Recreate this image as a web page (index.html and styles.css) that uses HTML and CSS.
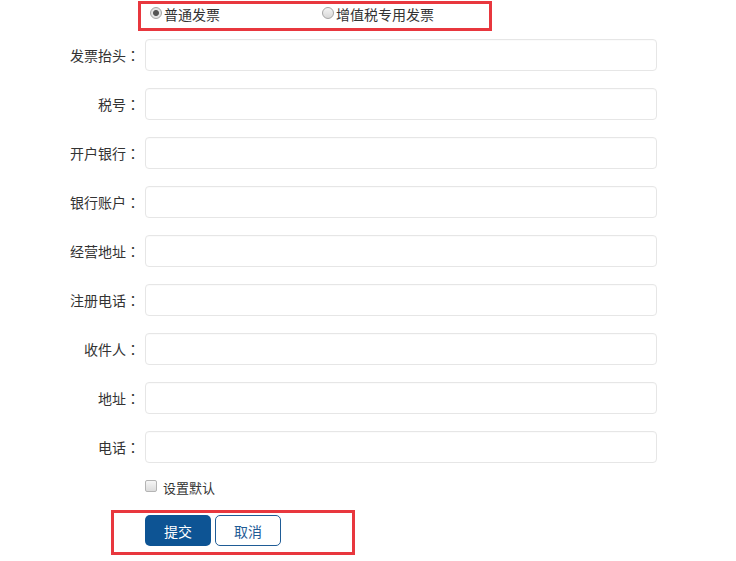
FILE: index.html
```html
<!DOCTYPE html>
<html lang="zh-CN">
<head>
  <meta charset="UTF-8" />
  <meta name="viewport" content="width=device-width, initial-scale=1.0" />
  <title>发票信息</title>
  <link rel="stylesheet" href="styles.css">
</head>
<body>
  <form class="invoice-form">
    <div class="invoice-type">
      <label class="type-option"><input type="radio" name="type" checked>普通发票</label>
      <label class="type-option second"><input type="radio" name="type">增值税专用发票</label>
    </div>

    <div class="row"><label class="row-label">发票抬头<span class="colon">：</span></label><input class="field" type="text"></div>
    <div class="row"><label class="row-label">税号<span class="colon">：</span></label><input class="field" type="text"></div>
    <div class="row"><label class="row-label">开户银行<span class="colon">：</span></label><input class="field" type="text"></div>
    <div class="row"><label class="row-label">银行账户<span class="colon">：</span></label><input class="field" type="text"></div>
    <div class="row"><label class="row-label">经营地址<span class="colon">：</span></label><input class="field" type="text"></div>
    <div class="row"><label class="row-label">注册电话<span class="colon">：</span></label><input class="field" type="text"></div>
    <div class="row"><label class="row-label">收件人<span class="colon">：</span></label><input class="field" type="text"></div>
    <div class="row"><label class="row-label">地址<span class="colon">：</span></label><input class="field" type="text"></div>
    <div class="row"><label class="row-label">电话<span class="colon">：</span></label><input class="field" type="text"></div>

    <label class="default-check"><input type="checkbox">设置默认</label>

    <div class="actions">
      <button type="button" class="btn btn-submit">提交</button>
      <button type="button" class="btn btn-cancel">取消</button>
    </div>
  </form>
</body>
</html>
```

FILE: styles.css
```css
body {
  margin: 0;
  font-family: "Noto Sans CJK SC", "Liberation Sans", sans-serif;
  font-size: 14px;
  color: #333;
  background-color: #fff;
}

.invoice-form {
  padding-top: 1px;
}

.invoice-type {
  display: flex;
  align-items: center;
  margin-left: 138px;
  width: 348px;
  height: 20px;
  padding-bottom: 4px;
  border: 3px solid #e8373e;
}

.type-option {
  display: flex;
  align-items: center;
  line-height: 20px;
  margin-left: 9px;
}

.type-option.second {
  margin-left: 102px;
}

.type-option input {
  appearance: none;
  width: 12px;
  height: 12px;
  margin: -3px 2px 0 0;
  border: 1px solid #a6a6a6;
  border-radius: 50%;
  background: linear-gradient(#f4f4f4, #d8d8d8);
}

.type-option input:checked {
  background: radial-gradient(circle, #555 0, #555 2.5px, #e4e4e4 3.5px, #dcdcdc 100%);
}

.row {
  display: flex;
  align-items: center;
  margin-top: 17px;
}

.invoice-type + .row {
  margin-top: 8px;
}

.row-label {
  width: 140px;
  text-align: right;
  margin-right: 5px;
}

/* centred full-width colon, as in the JP glyph set */
.colon {
  font-family: "Noto Sans CJK JP", sans-serif;
  font-feature-settings: "locl" 0;
}

.field {
  width: 512px;
  height: 32px;
  box-sizing: border-box;
  border: 1px solid #e6e6e6;
  border-radius: 4px;
  box-shadow: inset 0 1px 1px rgba(0,0,0,0.02);
}

.default-check {
  display: flex;
  align-items: center;
  margin: 15px 0 0 145px;
  font-size: 13px;
  line-height: 20px;
}

.default-check input {
  appearance: none;
  width: 12px;
  height: 12px;
  margin: -4px 6px 0 0;
  border: 1px solid #b4b4b4;
  border-radius: 2px;
  background: linear-gradient(#f6f6f6, #dcdcdc);
}

.actions {
  display: flex;
  gap: 4px;
  width: 207px;
  margin: 12px 0 0 111px;
  padding: 2px 0 6px 31px;
  border: 3px solid #e8373e;
}

.btn {
  width: 66px;
  height: 31px;
  border-radius: 5px;
  font-family: inherit;
  font-size: 14px;
  cursor: pointer;
}

.btn-submit {
  background-color: #0d5494;
  color: #fff;
  border: none;
}

.btn-cancel {
  background-color: #fff;
  color: #1f5c96;
  border: 1px solid #1f5c96;
}
```
